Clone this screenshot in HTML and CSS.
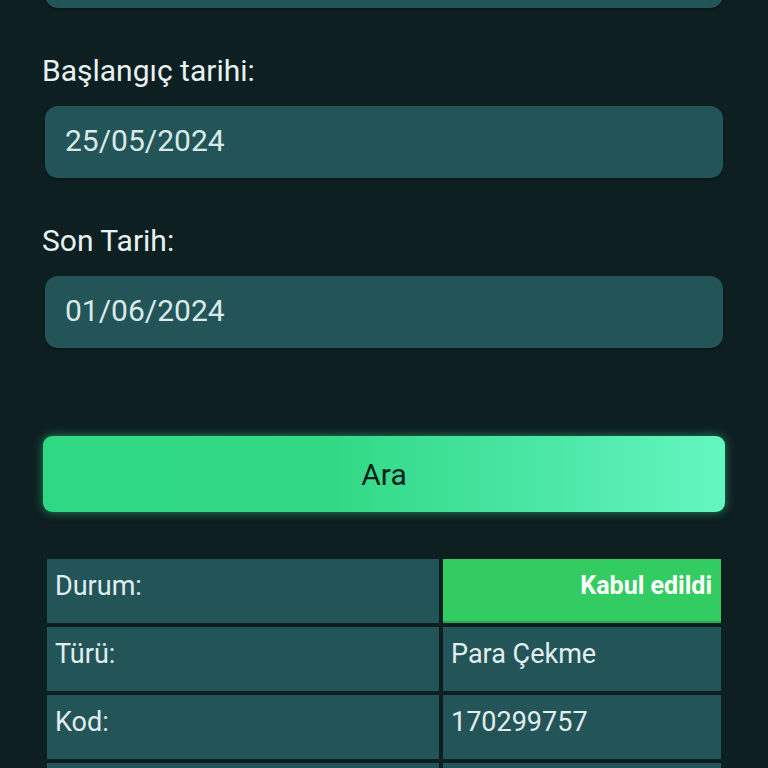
FILE: index.html
```html
<!DOCTYPE html>
<html lang="tr">
<head>
<meta charset="utf-8">
<title>İşlem Geçmişi</title>
<link rel="stylesheet" href="styles.css">
</head>
<body>
<main class="form">
  <div class="input input-top"></div>

  <label class="label">Başlangıç tarihi:</label>
  <div class="input">25/05/2024</div>

  <label class="label">Son Tarih:</label>
  <div class="input">01/06/2024</div>

  <button class="search-btn" type="button">Ara</button>

  <table class="result">
    <colgroup>
      <col class="col-key">
      <col class="col-val">
    </colgroup>
    <tr>
      <td>Durum:</td>
      <td class="status">Kabul edildi</td>
    </tr>
    <tr>
      <td>Türü:</td>
      <td>Para Çekme</td>
    </tr>
    <tr>
      <td>Kod:</td>
      <td>170299757</td>
    </tr>
    <tr>
      <td></td>
      <td></td>
    </tr>
  </table>
</main>
</body>
</html>
```

FILE: styles.css
```css
html, body {
  margin: 0;
  padding: 0;
  background: #0e1f22;
}

body {
  font-family: Roboto, "Noto Sans", "Liberation Sans", sans-serif;
  color: #e4f0f0;
  overflow: hidden;
}

.form {
  display: flex;
  flex-direction: column;
  padding: 0 45px;
}

.input {
  box-sizing: border-box;
  height: 72px;
  border-radius: 13px;
  background: #235457;
  box-shadow: 0 2px 2px rgba(0, 0, 0, 0.3);
  display: flex;
  align-items: center;
  padding: 0 20px 3px;
  font-size: 30px;
  line-height: 35px;
  color: #d8ebea;
}

.input-top {
  margin-top: -64px;
}

.label {
  display: block;
  margin: 45px 0 18px -3px;
  font-size: 30px;
  line-height: 35px;
  color: #e8f2f2;
}

.search-btn {
  box-sizing: border-box;
  margin: 88px -2px 0;
  height: 76px;
  border: none;
  border-radius: 9px;
  background: linear-gradient(to right, #2fd883 0%, #31d984 42%, #48e5a3 70%, #64f6c0 100%);
  box-shadow: 0 0 10px rgba(50, 220, 140, 0.55);
  font-family: inherit;
  font-size: 30px;
  color: #0d1f1c;
  padding: 0;
}

.result {
  margin: 43px -2px 0;
  width: calc(100% + 4px);
  border-collapse: separate;
  border-spacing: 4px;
  table-layout: fixed;
}

.col-key {
  width: 392px;
}

.result td {
  box-sizing: border-box;
  height: 64px;
  vertical-align: top;
  padding: 11px 8px 0;
  background: #235558;
  font-size: 27px;
  line-height: 32px;
  color: #e0eeee;
  white-space: nowrap;
}

.result td.status {
  background: #33cc62;
  color: #ffffff;
  font-size: 25px;
  font-weight: 700;
  text-align: right;
  padding-right: 9px;
  box-shadow: inset 0 -2px 0 #2aa852;
}
```
